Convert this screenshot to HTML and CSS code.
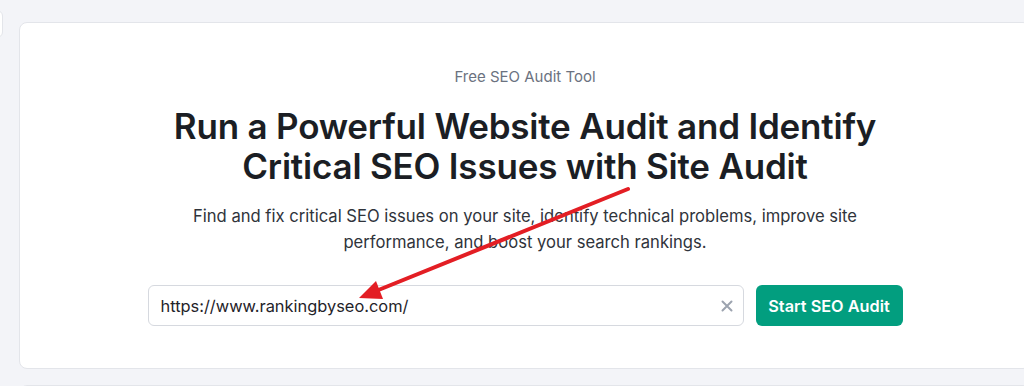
FILE: index.html
```html
<!DOCTYPE html>
<html lang="en">
<head>
<meta charset="utf-8">
<title>Free SEO Audit Tool</title>
<link rel="stylesheet" href="styles.css">
</head>
<body>
<div class="page">
  <div class="side-tab"></div>
  <div class="column">
    <section class="card">
      <p class="eyebrow">Free SEO Audit Tool</p>
      <h1 class="title">Run a Powerful Website Audit and Identify<br>Critical SEO Issues with Site Audit</h1>
      <p class="lead">Find and fix critical SEO issues on your site, identify technical problems, improve site performance, and boost your search rankings.</p>
      <form class="audit-form">
        <div class="field">
          <input class="url-input" type="text" value="https://www.rankingbyseo.com/">
          <span class="clear" aria-label="Clear">
            <svg width="12" height="12" viewBox="0 0 12 12"><path d="M1.5 1.5 L10.5 10.5 M10.5 1.5 L1.5 10.5" stroke="#9ca3af" stroke-width="2" stroke-linecap="round"/></svg>
          </span>
        </div>
        <button class="submit" type="button">Start SEO Audit</button>
      </form>
      <svg class="annotation" width="1012" height="346" viewBox="0 0 1012 346">
        <line x1="608" y1="166" x2="356" y2="268" stroke="#e31e24" stroke-width="4" stroke-linecap="round"/>
        <polygon points="339,275 356,258 363,276" fill="#e31e24"/>
      </svg>
    </section>
    <section class="card next"></section>
  </div>
</div>
</body>
</html>
```
FILE: styles.css
```css
* { box-sizing: border-box; }
html, body { margin: 0; padding: 0; }
body {
  background: #f3f4f8;
  font-family: Inter, "Noto Sans", "Liberation Sans", sans-serif;
  color: #1b1e24;
  overflow: hidden;
  height: 386px;
}
.page {
  display: flex;
  align-items: flex-start;
}
.side-tab {
  flex: none;
  width: 40px;
  height: 28px;
  margin-left: -37px;
  margin-top: 10px;
  background: #ffffff;
  border: 1px solid #e3e5ea;
  border-radius: 6px;
}
.column {
  flex: none;
  margin-left: 16px;
  margin-top: 22px;
  display: flex;
  flex-direction: column;
  gap: 16px;
}
.card {
  position: relative;
  width: 1012px;
  background: #ffffff;
  border: 1px solid #e3e5ea;
  border-radius: 8px;
  padding: 44px 32px 42px;
  display: flex;
  flex-direction: column;
  align-items: center;
  text-align: center;
}
.card.next { height: 60px; padding: 0; }
.eyebrow {
  margin: 0;
  font-size: 15px;
  line-height: 20px;
  color: #6b7280;
}
.title {
  margin: 19px 0 0;
  font-size: 35px;
  line-height: 40px;
  font-weight: 600;
  letter-spacing: -0.2px;
  color: #1b1e24;
}
.lead {
  margin: 17px 0 0;
  max-width: 690px;
  font-size: 16.6px;
  line-height: 26px;
  color: #30343b;
}
.audit-form {
  margin-top: 30px;
  display: flex;
  gap: 12px;
  width: 755px;
}
.field {
  flex: 1;
  display: flex;
  align-items: center;
  height: 41px;
  border: 1px solid #d6d9df;
  border-radius: 6px;
  padding: 0 10px 0 12px;
  background: #fff;
}
.url-input {
  flex: 1;
  border: 0;
  outline: 0;
  padding: 0;
  font-family: inherit;
  font-size: 16.4px;
  color: #1f2329;
  background: transparent;
}
.clear {
  display: flex;
  width: 12px;
  height: 12px;
}
.submit {
  flex: none;
  width: 147px;
  height: 41px;
  border: 0;
  border-radius: 6px;
  background: #029e7f;
  color: #ffffff;
  font-family: inherit;
  font-size: 16.3px;
  font-weight: 600;
  cursor: pointer;
}
.annotation {
  position: absolute;
  left: 0;
  top: 0;
  pointer-events: none;
}
```
